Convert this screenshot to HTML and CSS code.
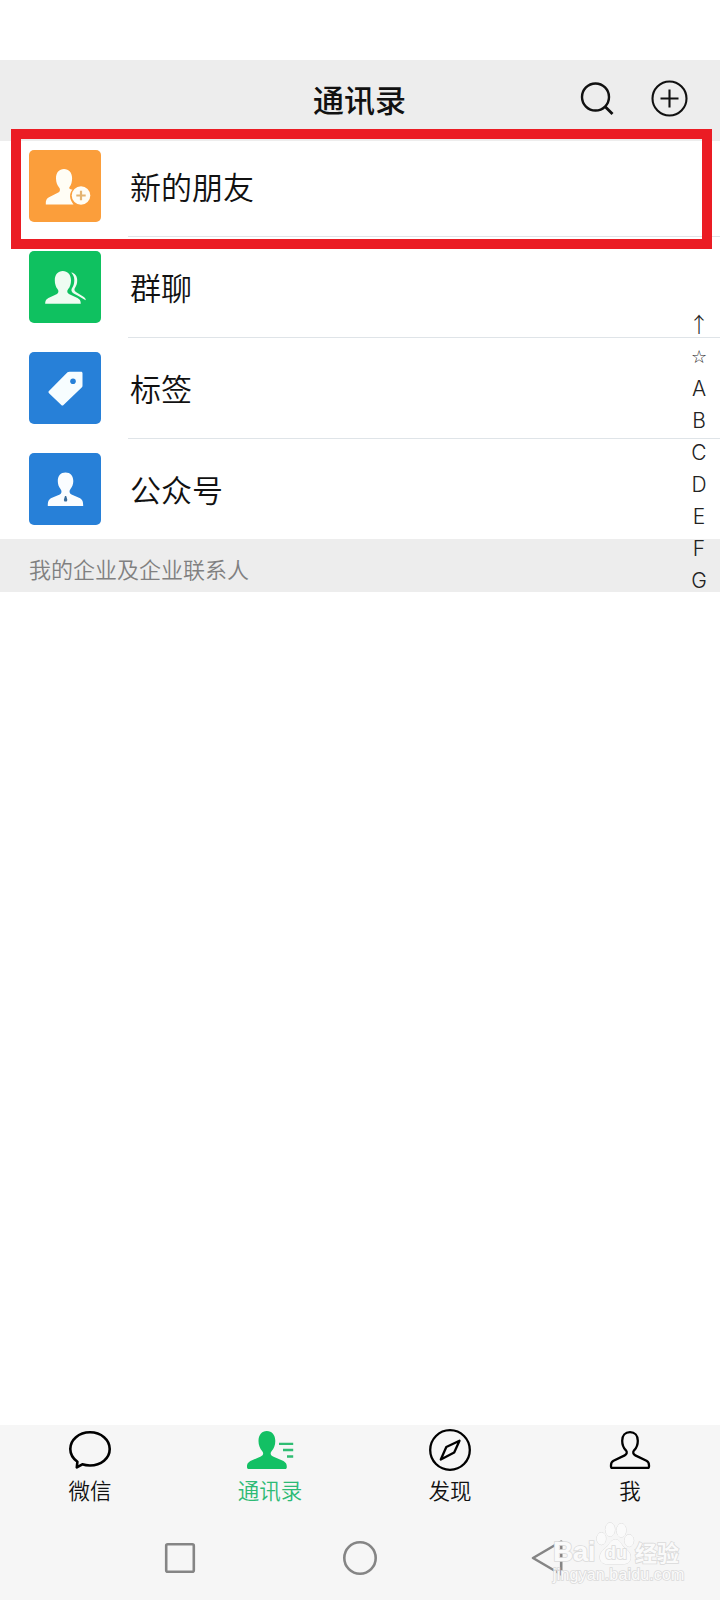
FILE: index.html
```html
<!DOCTYPE html>
<html lang="zh-CN">
<head>
<meta charset="utf-8">
<title>通讯录</title>
<link rel="stylesheet" href="styles.css">
</head>
<body>
<div class="screen">
  <header class="header">
    <h1 class="title">通讯录</h1>
    <div class="actions">
      <svg width="36" height="36" viewBox="0 0 36 36" fill="none" stroke="#111" stroke-width="2.4"><circle cx="15.500" cy="16" r="13.500"/><path d="M25 25.500 32.500 33" stroke-width="2.800"/></svg>
      <svg width="38" height="38" viewBox="0 0 38 38" fill="none" stroke="#111" stroke-width="2.1"><circle cx="18.500" cy="18.500" r="17"/><path d="M18.500 9.500v18M9.500 18.500h18"/></svg>
    </div>
  </header>
  <main class="content">
    <div class="row">
      <div class="tile orange"><svg viewBox="0 0 72 72" fill="#fffdf5"><path d="M35 19c-4.800 0-8 3.600-8 9.200 0 4.500 1.400 7.300 3.100 9.200 1.500 1.600 1 4.200-.8 5.200l-9.300 4.600c-2.300 1.200-3.500 3.200-3.200 7.300H44.500C40 49 40.200 43 43.500 39.800 40.500 39.600 39.500 38 40.700 36.800c1.500-1.900 2.400-5 2.400-8.600C43.100 22.600 39.800 19 35 19Z"/><circle cx="52" cy="45.500" r="9.300"/><path d="M52 40.800v9.400M47.300 45.500h9.400" stroke="#e4b472" stroke-width="2.200"/></svg></div>
      <div class="label">新的朋友</div>
    </div>
    <div class="row">
      <div class="tile green"><svg viewBox="0 0 72 72" fill="#effcf2"><path d="M42.200 21.600c4 .6 6 3.800 6 8.200 0 3-.8 5-2 6.600-1.300 1.800-.9 3.300.7 4.500l6.800 4.400c2.400 1.500 3 2.300 3 4-3.300-2.200-7.500-4.300-12-6.800-2.500-1.400-3-3.700-1.200-6.200 1.300-2 1.800-4.200 1.800-7.200 0-3-1-5.300-3.100-7.500Z"/><path d="M33.800 20c-4.800 0-8 3.500-8 9.400 0 3.700 1.100 6.400 2.700 8.700 1.500 2.100 1.200 4-1 5.200L20.500 46.500c-3.300 1.600-4.300 3-4.300 6.300h35.600c0-3.300-1.100-4.800-4.400-6.300l-7-3.200c-2.400-1.200-2.800-3.100-1.200-5.200 1.800-2.300 2.800-5 2.800-8.700 0-5.900-3.400-9.400-8.200-9.400Z"/></svg></div>
      <div class="label">群聊</div>
    </div>
    <div class="row">
      <div class="tile blue"><svg viewBox="0 0 72 72"><path d="M38.500 20.300c.6-.4 1.200-.6 2-.6H52c1 0 1.500.6 1.500 1.500v12.500c0 .8-.2 1.300-.8 1.900L34.500 53c-.7.700-1.500.7-2.200 0L20 41.200c-.8-.8-.7-1.700.2-2.400Z" fill="#f7fdff"/><circle cx="44" cy="29.200" r="2.800" fill="#2780d8"/></svg></div>
      <div class="label">标签</div>
    </div>
    <div class="row last">
      <div class="tile blue"><svg viewBox="0 0 72 72"><path d="M36.500 19.500c-4.800 0-7.700 3.300-7.700 8.500 0 3.300 1 5.900 2.700 7.900 1.500 1.900 1.400 4.400-.7 5.500l-7.800 3.400c-3.200 1.500-4.200 3-4.200 8.200h35.400c0-5.200-1-6.700-4.200-8.200L42.500 41.400c-2.300-1.100-2.600-3.600-1-5.500 1.700-2 2.800-4.600 2.800-7.900 0-5.200-3-8.500-7.800-8.500Z" fill="#fafdff"/><path d="M36 43h1.200l1.200 4-.7 1.500h-2.200l-.7-1.500Z" fill="#386b99"/></svg></div>
      <div class="label">公众号</div>
    </div>
    <div class="section">我的企业及企业联系人</div>
    <nav class="index"><span class="arrow">↑</span><span class="star">☆</span><span>A</span><span>B</span><span>C</span><span>D</span><span>E</span><span>F</span><span>G</span></nav>
    <div class="highlight"></div>
  </main>
  <footer class="footer">
    <nav class="tabs">
      <div class="tab"><svg viewBox="0 0 48 48" fill="none" stroke="#000" stroke-width="2.600" stroke-linejoin="round"><path d="M24 6.300c11.200 0 19.700 7.400 19.700 16.700S35.200 39.500 24 39.500c-2.800 0-5.400-.4-7.700-1.200l-5.500 3.100.6-5.700C7 32.600 4.300 28 4.300 23 4.300 13.700 12.800 6.300 24 6.300Z"/></svg><span>微信</span></div>
      <div class="tab active"><svg viewBox="0 0 48 48" fill="#13c064"><path d="M20.800 5c-5 0-8.300 4-8.300 9.900 0 4.100 1.400 7.500 3.600 10.100 1.800 2.200 1.300 4.200-1.300 5.500L5.500 34.500c-3.300 1.700-4.500 3-4.500 6.400 0 1.300.6 2.100 1.900 2.100h36c1.300 0 1.900-.8 1.900-2.100 0-3.400-1.200-4.700-4.500-6.400L27 30.500c-2.600-1.300-3.100-3.300-1.300-5.500 2.300-2.600 3.600-6 3.600-10.100C29.300 9 26 5 20.800 5Z"/><path d="M33 17.900h14.200M37 24h10.200M41 30.500h6.200" stroke="#2fbd73" stroke-width="2.400"/></svg><span>通讯录</span></div>
      <div class="tab"><svg viewBox="0 0 48 48" fill="none" stroke="#000" stroke-width="2.300" stroke-linejoin="round"><circle cx="24" cy="24" r="19.800"/><path d="M33.500 14.700 28.200 26.500 14.800 33.500 20.300 21Z"/></svg><span>发现</span></div>
      <div class="tab"><svg viewBox="0 0 48 48" fill="none" stroke="#000" stroke-width="2.300" stroke-linejoin="round"><path d="M24 6.200c-4.800 0-7.800 3.500-7.800 8.500 0 4 1.200 7 3.500 9.400 1.800 2 1.300 4.200-1 5.300L7.500 34.800C5.600 35.800 5 37 5 39.300v1.200c0 .9.500 1.400 1.400 1.400h35.200c.9 0 1.400-.5 1.400-1.400v-1.200c0-2.300-.6-3.500-2.500-4.500l-11.200-5.400c-2.300-1.100-2.800-3.300-1-5.300 2.300-2.400 3.500-5.400 3.500-9.400 0-5-3-8.500-7.800-8.500Z"/></svg><span>我</span></div>
    </nav>
    <div class="system">
      <svg viewBox="0 0 40 40"><rect x="6.200" y="6.200" width="27.600" height="27.600" rx="1.500"/></svg>
      <svg viewBox="0 0 40 40"><circle cx="20" cy="20" r="15.700"/></svg>
      <svg class="back" viewBox="0 0 40 40"><path d="M33.200 3.500v33L5 20Z" stroke-linejoin="round"/></svg>
    </div>
    <div class="watermark">
      <div class="brand"><span class="bai">Bai</span><span class="paw"><svg viewBox="0 0 40 44"><ellipse cx="5.500" cy="17" rx="4.700" ry="6.300"/><ellipse cx="14.500" cy="7.700" rx="4.900" ry="7"/><ellipse cx="26" cy="8.500" rx="4.900" ry="7"/><ellipse cx="34" cy="19" rx="4.700" ry="6.300"/><path d="M20 18c-4 0-5.500 3.500-8 6.500S4 30 4 36c0 4.500 3 7 7 7h17c4.500 0 7.500-2.500 7.500-7 0-6-5.500-8.500-8-11.500S24 18 20 18Z"/></svg><span class="du">du</span></span><span class="exp">经验</span></div>
      <div class="url">jingyan.baidu.com</div>
    </div>
  </footer>
</div>
</body>
</html>
```
FILE: styles.css
```css
* { box-sizing: border-box; }
body {
  margin: 0;
  background: #fff;
  color: #111;
  font-family: "Noto Sans CJK SC", sans-serif;
}
svg { display: block; }
.screen {
  width: 720px;
  height: 1600px;
  padding-top: 60px;
  display: flex;
  flex-direction: column;
  overflow: hidden;
}
.header {
  height: 81px;
  flex: none;
  background: #ededed;
  display: grid;
  grid-template-columns: 1fr auto 1fr;
  align-items: center;
}
.title {
  grid-column: 2;
  margin: 0 1px 4px 0;
  font-size: 31px;
  line-height: 40px;
  font-weight: 500;
}
.actions {
  display: flex;
  justify-content: flex-end;
  align-items: center;
  gap: 35px;
  padding: 0 31px 3px 0;
}
.content { position: relative; flex: 1; }
.row {
  height: 101px;
  padding: 14px 0 0 29px;
  display: flex;
  gap: 27px;
}
.row:first-child { height: 96px; padding-top: 9px; }
.tile { width: 72px; height: 72px; flex: none; border-radius: 5px; }
.tile svg { width: 72px; height: 72px; }
.orange { background: #fb9e3b; }
.green { background: #0fc160; }
.blue { background: #2780d8; }
.label {
  flex: 1;
  height: 87px;
  padding-left: 2px;
  border-bottom: 1px solid #dfe4e8;
  font-size: 31px;
  font-weight: 350;
  line-height: 71px;
}
.last .label { border: 0; }
.section {
  height: 53px;
  margin-top: -1px;
  padding-left: 29px;
  background: #ededed;
  color: #808080;
  font-size: 22px;
  font-weight: 350;
  line-height: 59px;
}
.index {
  position: absolute;
  top: 168px;
  right: 5px;
  width: 32px;
  display: flex;
  flex-direction: column;
  align-items: center;
  font: 300 21px/32px Inter, Roboto, sans-serif;
  color: #222;
}
.index span { height: 32px; }
.index .arrow { font-family: "Noto Sans CJK SC", sans-serif; line-height: 28px; }
.index .star { font: 18px/32px "DejaVu Sans", sans-serif; }
.highlight {
  position: absolute;
  left: 11px;
  top: -12px;
  width: 701px;
  height: 120px;
  border: 10px solid #eb1c24;
}
.footer {
  position: relative;
  height: 175px;
  flex: none;
  background: #f6f6f6;
}
.tabs { display: grid; grid-template-columns: repeat(4, 1fr); }
.tab {
  padding-top: 1px;
  display: flex;
  flex-direction: column;
  align-items: center;
  font-size: 21.5px;
  font-weight: 350;
  line-height: 32px;
}
.tab svg { width: 48px; height: 48px; }
.tab span { margin-bottom: 2px; }
.active { color: #2dba75; }
.system {
  display: flex;
  gap: 140px;
  padding: 30px 0 0 160px;
}
.system svg { width: 40px; height: 40px; fill: none; stroke: #858585; stroke-width: 2.600; }
.system .back { margin-left: 8px; }
.watermark {
  position: absolute;
  left: 553px;
  top: 96px;
  width: 130px;
  color: #fafafa;
  -webkit-text-stroke: 1.600px #dadada;
  paint-order: stroke fill;
}
.brand { display: flex; align-items: flex-end; height: 44px; }
.bai { font: bold 28px/26px "Liberation Sans", sans-serif; width: 43px; letter-spacing: -.5px; }
.paw { position: relative; }
.paw svg { width: 39px; height: 43px; fill: #fafafa; stroke: #dadada; stroke-width: 1; }
.du {
  position: absolute;
  left: 9px;
  top: 21px;
  font: bold 18px/20px "Liberation Sans", sans-serif;
}
.exp { font-size: 22px; line-height: 28px; font-weight: 700; }
.url { font: 16px/18px "Liberation Sans", sans-serif; margin-top: 1px; white-space: nowrap; letter-spacing: .15px; }
```
